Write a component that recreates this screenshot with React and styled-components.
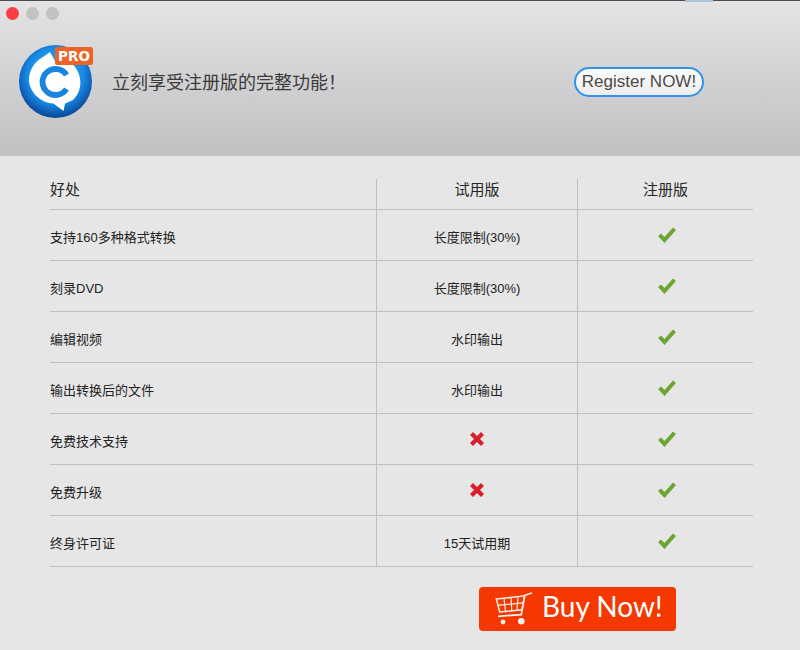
import React from "react";
import styled, { createGlobalStyle } from "styled-components";

const Global = createGlobalStyle`
  html, body {
    margin: 0;
    padding: 0;
    background: #e6e6e6;
  }
  body {
    font-family: "Liberation Sans", "Noto Sans CJK SC", sans-serif;
    color: #333;
  }
`;

const Page = styled.div`
  width: 800px;
  height: 650px;
  overflow: hidden;
  display: flex;
  flex-direction: column;
`;

const Header = styled.header`
  height: 155px;
  border-top: 1px solid #4a4a4c;
  background: linear-gradient(#e4e3e5, #c0bfc1);
  display: flex;
  flex-direction: column;
  flex-shrink: 0;
  position: relative;
`;

const TopMark = styled.span`
  position: absolute;
  top: -1px;
  left: 685px;
  width: 28px;
  height: 2px;
  background: #a9c6dc;
`;

const TitleBar = styled.div`
  display: flex;
  align-items: center;
  gap: 7px;
  padding: 4px 0 0 6px;
  height: 20px;
  box-sizing: border-box;
`;

const Light = styled.span`
  width: 13px;
  height: 13px;
  border-radius: 50%;
  background: ${(p) => p.$color};
`;

const Banner = styled.div`
  display: flex;
  align-items: center;
  height: 76px;
  margin-top: 23px;
  padding-left: 18px;
`;

const LogoBox = styled.div`
  position: relative;
  width: 76px;
  height: 76px;
  flex-shrink: 0;
`;

const ProBadge = styled.span`
  position: absolute;
  top: 3px;
  left: 37px;
  width: 38px;
  height: 18px;
  border-radius: 2px;
  background: #ee6328;
  color: #fff;
  font: bold 13.5px/18px "DejaVu Sans", sans-serif;
  text-align: center;
`;

const Title = styled.h1`
  margin: 0 0 3px 18px;
  width: 462px;
  font-size: 18px;
  font-weight: 400;
  color: #3c3b3b;
`;

const RegisterButton = styled.button`
  width: 130px;
  height: 30px;
  padding: 0;
  border: 2px solid #2f93ea;
  border-radius: 15px;
  background: linear-gradient(#fdfcfc, #eeeded);
  color: #4b4a4a;
  font: 17px "Liberation Sans", sans-serif;
  white-space: nowrap;
`;

const Table = styled.div`
  display: grid;
  grid-template-columns: 326px 201px 176px;
  margin: 23px 0 0 50px;
  width: 703px;
`;

const HeadCell = styled.div`
  height: 31px;
  border-bottom: 1px solid #bfbfbf;
  border-left: ${(p) => (p.$first ? "none" : "1px solid #bfbfbf")};
  display: flex;
  align-items: center;
  justify-content: ${(p) => (p.$first ? "flex-start" : "center")};
  font-size: 15px;
  color: #262626;
  padding-bottom: 11px;
  box-sizing: border-box;
`;

const Cell = styled.div`
  height: 51px;
  border-bottom: 1px solid #bfbfbf;
  border-left: ${(p) => (p.$first ? "none" : "1px solid #bfbfbf")};
  display: flex;
  align-items: center;
  justify-content: ${(p) => (p.$first ? "flex-start" : "center")};
  font-size: 13px;
  color: #222;
  padding-top: 3px;
  box-sizing: border-box;
`;

const Mark = styled.svg`
  display: block;
  margin: -3px 0 0 ${(p) => p.$shift}px;
`;

const Footer = styled.div`
  display: flex;
  margin: 20px 0 0 479px;
`;

const BuyButton = styled.button`
  width: 197px;
  height: 44px;
  border: none;
  border-radius: 4px;
  background: #f53700;
  color: #fff;
  display: flex;
  align-items: center;
  gap: 9px;
  padding: 0 0 0 16px;
  font: 28px "Lato", sans-serif;
  white-space: nowrap;
`;

const BuyLabel = styled.span`
  margin-bottom: 6px;
`;

function Logo() {
  return (
    <svg width="76" height="76" viewBox="0 0 76 76">
      <defs>
        <radialGradient id="logoBlue" cx="50%" cy="42%" r="56%">
          <stop offset="0%" stopColor="#3cbcf6" />
          <stop offset="70%" stopColor="#1788e4" />
          <stop offset="100%" stopColor="#0a4c9c" />
        </radialGradient>
      </defs>
      <circle cx="37.5" cy="37.5" r="36.5" fill="url(#logoBlue)" />
      <path
        d="M11 38 A26 26 0 0 1 25 13 L32 8 L38 19 L52 18 A26 26 0 0 1 62 43 A26 26 0 0 1 55 56 L47 59.5 L45.5 67 L35.5 59.5 A26 26 0 0 1 11 38 Z"
        fill="#fff"
      />
      <path
        d="M48.5 31 A13 13 0 1 0 48.5 45"
        fill="none"
        stroke="#1a85dc"
        strokeWidth="5.8"
      />
    </svg>
  );
}

function Check() {
  return (
    <Mark $shift={3} width="18" height="16" viewBox="0 0 18 16">
      <path d="M0 9 L3 6.5 L6.5 10 L15 0.5 L18 3 L6.5 16 Z" fill="#6da535" />
    </Mark>
  );
}

function Cross() {
  return (
    <Mark $shift={0} width="14" height="14" viewBox="0 0 14 14">
      <path
        d="M0 3 L3 0 L7 4 L11 0 L14 3 L10 7 L14 11 L11 14 L7 10 L3 14 L0 11 L4 7 Z"
        fill="#d81f2a"
      />
    </Mark>
  );
}

function Cart() {
  return (
    <svg width="38" height="34" viewBox="0 0 38 34" fill="none" stroke="#f7efe9">
      <path d="M37 1 L29.7 3.3 L26.3 22.7 L3 24.3" strokeWidth="1.7" />
      <path d="M1.3 7 L29.7 3.8 L27 17.7 L4.7 20 Z" strokeWidth="1.5" />
      <path
        d="M2.8 13.3 L28.3 10.8 M9 6.5 L10.5 19.5 M16 5.5 L16.8 18.8 M23 4.8 L22 18"
        strokeWidth="1.2"
      />
      <circle cx="8" cy="30" r="2.4" fill="#f7efe9" stroke="none" />
      <circle cx="26.3" cy="29.3" r="3.3" fill="#f7efe9" stroke="none" />
    </svg>
  );
}

const rows = [
  ["支持160多种格式转换", "长度限制(30%)"],
  ["刻录DVD", "长度限制(30%)"],
  ["编辑视频", "水印输出"],
  ["输出转换后的文件", "水印输出"],
  ["免费技术支持", null],
  ["免费升级", null],
  ["终身许可证", "15天试用期"],
];

export default function App() {
  return (
    <Page>
      <Global />
      <Header>
        <TopMark />
        <TitleBar>
          <Light $color="#fc3c44" />
          <Light $color="#c3c2c3" />
          <Light $color="#c3c2c3" />
        </TitleBar>
        <Banner>
          <LogoBox>
            <Logo />
            <ProBadge>PRO</ProBadge>
          </LogoBox>
          <Title>立刻享受注册版的完整功能！</Title>
          <RegisterButton>Register NOW!</RegisterButton>
        </Banner>
      </Header>
      <Table>
        <HeadCell $first>好处</HeadCell>
        <HeadCell>试用版</HeadCell>
        <HeadCell>注册版</HeadCell>
        {rows.map(([name, trial]) => (
          <React.Fragment key={name}>
            <Cell $first>{name}</Cell>
            <Cell>{trial || <Cross />}</Cell>
            <Cell>
              <Check />
            </Cell>
          </React.Fragment>
        ))}
      </Table>
      <Footer>
        <BuyButton>
          <Cart />
          <BuyLabel>Buy Now!</BuyLabel>
        </BuyButton>
      </Footer>
    </Page>
  );
}
